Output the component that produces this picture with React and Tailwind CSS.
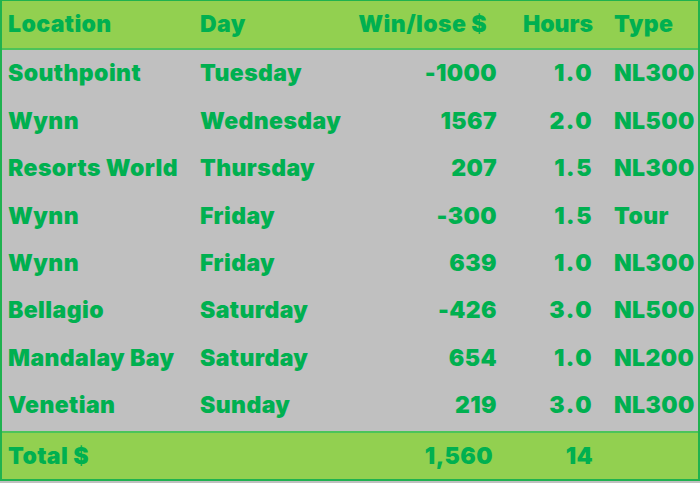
import React from "react";

const rows = [
  ["Southpoint", "Tuesday", "-1000", "1.0", "NL300"],
  ["Wynn", "Wednesday", "1567", "2.0", "NL500"],
  ["Resorts World", "Thursday", "207", "1.5", "NL300"],
  ["Wynn", "Friday", "-300", "1.5", "Tour"],
  ["Wynn", "Friday", "639", "1.0", "NL300"],
  ["Bellagio", "Saturday", "-426", "3.0", "NL500"],
  ["Mandalay Bay", "Saturday", "654", "1.0", "NL200"],
  ["Venetian", "Sunday", "219", "3.0", "NL300"],
];

function Row({ c, className = "", h }) {
  return (
    <div className={`flex items-center pl-[6px] ${h} ${className}`}>
      <div className="w-[192px] whitespace-nowrap">{c[0]}</div>
      <div className="w-[150px] whitespace-nowrap">{c[1]}</div>
      <div className="w-[147px] text-right whitespace-nowrap">{c[2]}</div>
      <div className="w-[96px] text-right tracking-[1.5px]">{c[3]}</div>
      <div className="ml-[21px] whitespace-nowrap">{c[4]}</div>
    </div>
  );
}

export default function App() {
  return (
    <div
      className="w-[700px] h-[483px] bg-[#c0c0c0] text-[#00b050] text-[23px] font-black tracking-[0.4px]"
      style={{ fontFamily: "Inter, 'Noto Sans', sans-serif" }}
    >
      <div className="h-[481px] border-x-2 border-t border-b-2 border-[#1fb24f] flex flex-col">
        <Row
          h="h-[49px]"
          className="bg-[#92d050] border-b-2 border-[#4cc35a]"
          c={["Location", "Day", <span className="pr-[10px]">Win/lose $</span>, <span className="tracking-[0px]">Hours</span>, "Type"]}
        />
        <div className="flex-1 flex flex-col pb-[2px]">
          {rows.map((r, i) => (
            <Row key={i} h="flex-1" c={r} />
          ))}
        </div>
        <div className="h-[48px] bg-[#92d050] border-t-2 border-[#4cc35a] flex items-center pl-[6px]">
          <div className="w-[192px]">Total $</div>
          <div className="w-[150px]"></div>
          <div className="w-[143px] text-right">1,560</div>
          <div className="w-[100px] text-right">14</div>
        </div>
      </div>
    </div>
  );
}
